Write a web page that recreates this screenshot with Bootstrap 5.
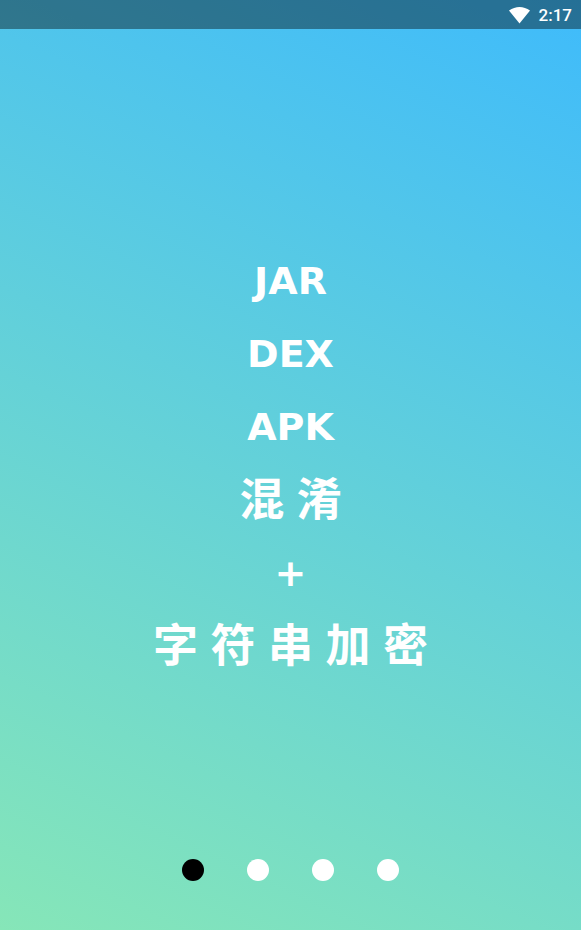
<!DOCTYPE html>
<html lang="zh-CN">
<head>
<meta charset="utf-8">
<meta name="viewport" content="width=device-width, initial-scale=1">
<title>JAR DEX APK</title>
<link href="https://cdn.jsdelivr.net/npm/bootstrap@5.3.0/dist/css/bootstrap.min.css" rel="stylesheet">
<style>
  .intro {
    background: linear-gradient(205deg, #3fbbfb, #86e6b8);
    font-family: "DejaVu Sans", "Noto Sans CJK SC", sans-serif;
  }
  .status-bar {
    height: 29px;
    padding: 2px 9px 0 0;
    background: rgba(0, 0, 0, .4);
    font: 500 17px/29px Roboto, sans-serif;
  }
  .slide-line { font-size: 38px; line-height: 73px; }
  .slide-line-zh {
    font-family: "Liberation Sans", "Noto Sans CJK SC", sans-serif;
    font-size: 45px;
    line-height: 73px;
  }
  .pager { gap: 43px; padding-bottom: 49px; }
  .page-dot { width: 22px; height: 22px; background: #fff; }
  .page-dot[aria-current] { background: #000; }
</style>
</head>
<body>
<div class="intro min-vh-100 d-flex flex-column text-white">
  <header class="status-bar d-flex align-items-center justify-content-end gap-2">
    <svg width="22" height="18" viewBox="0 0 22 18" aria-hidden="true"><path fill="#fff" d="M0 3.500Q5 0 10.500 0T21 3.500L10.500 16.500Z"/></svg>
    <span>2:17</span>
  </header>
  <main class="flex-grow-1 d-flex flex-column justify-content-center text-center fw-bold pt-4 mt-3">
    <div class="slide-line">JAR</div>
    <div class="slide-line">DEX</div>
    <div class="slide-line">APK</div>
    <div class="slide-line-zh">混 淆</div>
    <div class="slide-line">+</div>
    <div class="slide-line-zh">字 符 串 加 密</div>
  </main>
  <nav class="pager d-flex justify-content-center" aria-label="引导页">
    <button type="button" class="page-dot border-0 rounded-circle p-0" aria-label="第 1 页" aria-current="true"></button>
    <button type="button" class="page-dot border-0 rounded-circle p-0" aria-label="第 2 页"></button>
    <button type="button" class="page-dot border-0 rounded-circle p-0" aria-label="第 3 页"></button>
    <button type="button" class="page-dot border-0 rounded-circle p-0" aria-label="第 4 页"></button>
  </nav>
</div>
<script src="https://cdn.jsdelivr.net/npm/bootstrap@5.3.0/dist/js/bootstrap.bundle.min.js"></script>
</body>
</html>
